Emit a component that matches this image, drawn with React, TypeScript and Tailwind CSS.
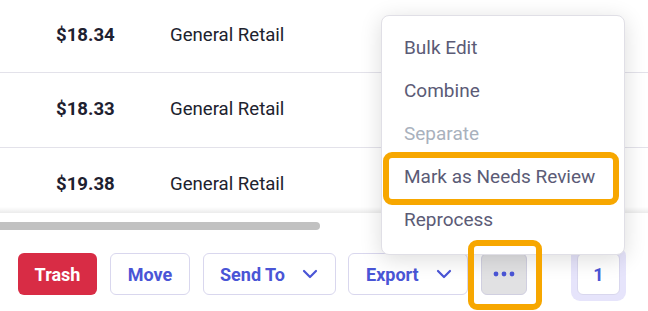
import React from "react";

function Chevron() {
  return (
    <svg width="16" height="10" viewBox="0 0 16 10" fill="none" className="shrink-0">
      <path d="M2 2l6 6 6-6" stroke="#4a55d6" strokeWidth="2.2" strokeLinecap="round" strokeLinejoin="round" />
    </svg>
  );
}

const rows = [
  { amt: "$18.34", h: "h-[72px]" },
  { amt: "$18.33", h: "h-[74px]" },
  { amt: "$19.38", h: "h-[74px]" },
];

export default function App() {
  return (
    <div
      className="relative w-[648px] h-[311px] overflow-hidden bg-white text-[18px]"
      style={{ fontFamily: "Roboto, 'Noto Sans', sans-serif" }}
    >
      {/* table */}
      <div className="relative h-[213px] overflow-hidden text-[18.6px]">
        {rows.map((r, i) => (
          <div key={i} className={`flex items-center ${r.h} border-b border-[#e3e2ea] box-content`}>
            <div className="w-[170px] pl-[56px] font-bold text-[#1e2130]">{r.amt}</div>
            <div className="text-[#20222e]">General Retail</div>
          </div>
        ))}
        <div className="absolute inset-x-0 bottom-0 h-[6px] bg-gradient-to-b from-[rgba(0,0,0,0)] to-[rgba(0,0,0,0.08)]" />
      </div>

      {/* footer */}
      <div className="bg-white">
        <div className="pt-[9px] h-[17px]">
          <div className="w-[320px] h-[8px] rounded-r-full bg-[#c1c1c1]" />
        </div>
        <div className="flex items-center pl-[18px] pt-[23px]">
          <button className="h-[42px] w-[79px] rounded-[6px] bg-[#d82c45] text-white font-bold">Trash</button>
          <button className="ml-[13px] h-[42px] w-[80px] rounded-[6px] border border-[#d9d7ee] bg-white text-[#4a55d6] font-bold">
            Move
          </button>
          <button className="ml-[13px] h-[42px] w-[133px] pl-[16px] pr-[17px] rounded-[6px] border border-[#d9d7ee] bg-white text-[#4a55d6] font-bold flex items-center justify-between">
            <span>Send To</span>
            <Chevron />
          </button>
          <button className="ml-[12px] h-[42px] w-[120px] pl-[17px] pr-[15px] rounded-[6px] border border-[#d9d7ee] bg-white text-[#4a55d6] font-bold flex items-center justify-between">
            <span>Export</span>
            <Chevron />
          </button>
          <button className="ml-[13px] h-[42px] w-[46px] rounded-[6px] border border-[#d0cfe0] bg-[#e1e1e3] flex items-center justify-center">
            <svg width="22" height="6" viewBox="0 0 22 6">
              <circle cx="3" cy="3" r="2.4" fill="#4a55d6" />
              <circle cx="11" cy="3" r="2.4" fill="#4a55d6" />
              <circle cx="19" cy="3" r="2.4" fill="#4a55d6" />
            </svg>
          </button>
          <div className="ml-[44px] -my-[6px] rounded-[9px] bg-[#e6e4fb] p-[6px]">
            <button className="block h-[42px] w-[43px] rounded-[6px] border border-[#d9d7ee] bg-white text-[#4a55d6] font-bold">
              1
            </button>
          </div>
        </div>
      </div>

      {/* dropdown menu */}
      <div className="absolute left-[381px] top-[15px] w-[244px] rounded-[8px] border border-[#e0dfe6] bg-white pt-[11px] pb-[12px] text-[19px] shadow-[0_4px_22px_rgba(0,0,0,0.14)]">
        {["Bulk Edit", "Combine", "Separate", "Mark as Needs Review", "Reprocess"].map((t) => (
          <div
            key={t}
            className={`h-[43px] flex items-center pl-[22px] ${t === "Separate" ? "text-[#a9b1bd]" : "text-[#5b5b76]"}`}
          >
            {t}
          </div>
        ))}
      </div>

      {/* annotation highlights */}
      <div className="absolute left-[383px] top-[152px] w-[236px] h-[53px] rounded-[9px] border-[6px] border-[#f7a700]" />
      <div className="absolute left-[468px] top-[240px] w-[74px] h-[70px] rounded-[9px] border-[6px] border-[#f7a700]" />
    </div>
  );
}
